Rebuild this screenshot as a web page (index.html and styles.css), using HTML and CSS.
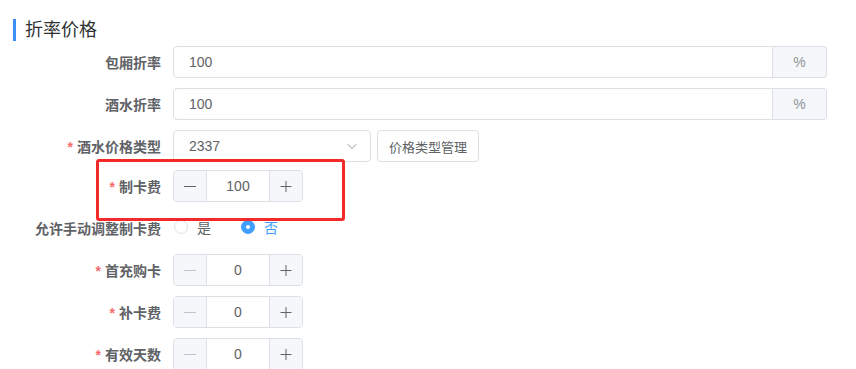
FILE: index.html
```html
<!DOCTYPE html>
<html>
<head>
    <title>折率价格</title>
    <link rel="stylesheet" href="styles.css">
</head>
<body>
    <div class="page">
        <h3 class="section-title">折率价格</h3>

        <form class="price-form" onsubmit="return false;">
            <div class="form-item">
                <label class="item-label">包厢折率</label>
                <div class="input-group wide">
                    <input type="text" class="text-input" value="100">
                    <span class="suffix">%</span>
                </div>
            </div>

            <div class="form-item">
                <label class="item-label">酒水折率</label>
                <div class="input-group wide">
                    <input type="text" class="text-input" value="100">
                    <span class="suffix">%</span>
                </div>
            </div>

            <div class="form-item tight">
                <label class="item-label"><span class="req">*</span>酒水价格类型</label>
                <div class="select-box">
                    <span class="select-value">2337</span>
                    <svg class="arrow" width="12" height="12" viewBox="0 0 12 12">
                        <path d="M1.5 4 L6 8.5 L10.5 4" fill="none" stroke="#c0c4cc" stroke-width="1.1"/>
                    </svg>
                </div>
                <button type="button" class="plain-btn">价格类型管理</button>
            </div>

            <div class="form-item">
                <label class="item-label"><span class="req">*</span>制卡费</label>
                <div class="number-input">
                    <span class="num-btn"><svg width="14" height="14" viewBox="0 0 14 14"><path d="M1 7.5 H13" stroke="currentColor"/></svg></span>
                    <input type="text" class="num-value" value="100">
                    <span class="num-btn"><svg width="14" height="14" viewBox="0 0 14 14"><path d="M1.5 7.5 H12.5 M7 2 V13" stroke="currentColor"/></svg></span>
                </div>
            </div>

            <div class="form-item">
                <label class="item-label">允许手动调整制卡费</label>
                <div class="radio-group">
                    <span class="radio"><span class="circle"></span>是</span>
                    <span class="radio checked"><span class="circle"></span>否</span>
                </div>
            </div>

            <div class="form-item">
                <label class="item-label"><span class="req">*</span>首充购卡</label>
                <div class="number-input">
                    <span class="num-btn disabled"><svg width="14" height="14" viewBox="0 0 14 14"><path d="M1 7.5 H13" stroke="currentColor"/></svg></span>
                    <input type="text" class="num-value" value="0">
                    <span class="num-btn"><svg width="14" height="14" viewBox="0 0 14 14"><path d="M1.5 7.5 H12.5 M7 2 V13" stroke="currentColor"/></svg></span>
                </div>
            </div>

            <div class="form-item">
                <label class="item-label"><span class="req">*</span>补卡费</label>
                <div class="number-input">
                    <span class="num-btn disabled"><svg width="14" height="14" viewBox="0 0 14 14"><path d="M1 7.5 H13" stroke="currentColor"/></svg></span>
                    <input type="text" class="num-value" value="0">
                    <span class="num-btn"><svg width="14" height="14" viewBox="0 0 14 14"><path d="M1.5 7.5 H12.5 M7 2 V13" stroke="currentColor"/></svg></span>
                </div>
            </div>

            <div class="form-item">
                <label class="item-label"><span class="req">*</span>有效天数</label>
                <div class="number-input">
                    <span class="num-btn disabled"><svg width="14" height="14" viewBox="0 0 14 14"><path d="M1 7.5 H13" stroke="currentColor"/></svg></span>
                    <input type="text" class="num-value" value="0">
                    <span class="num-btn"><svg width="14" height="14" viewBox="0 0 14 14"><path d="M1.5 7.5 H12.5 M7 2 V13" stroke="currentColor"/></svg></span>
                </div>
            </div>
        </form>

        <!-- annotation box -->
        <div class="highlight"></div>
    </div>
</body>
</html>
```

FILE: styles.css
```css
body {
    margin: 0;
    font-family: "Liberation Sans", "Noto Sans CJK SC", sans-serif;
    background-color: #fff;
    color: #606266;
}

.page {
    position: relative;
    padding-left: 13px;
    height: 369px;
    overflow: hidden;
}

.section-title {
    margin: 19px 0 5px 0;
    padding-left: 9px;
    border-left: 3px solid #3d8ef8;
    font-size: 18px;
    line-height: 22px;
    font-weight: normal;
    color: #303133;
}

.form-item {
    display: flex;
    align-items: center;
    height: 32px;
    margin-bottom: 10px;
}

.form-item.tight {
    margin-bottom: 8px;
}

.item-label {
    width: 160px;
    padding-right: 12px;
    box-sizing: border-box;
    text-align: right;
    font-size: 14px;
    font-weight: bold;
    color: #606266;
    white-space: nowrap;
}

.req {
    color: #f56c6c;
    margin-right: 4px;
}

.input-group {
    display: flex;
    height: 32px;
}

.input-group.wide {
    width: 654px;
}

.text-input {
    flex: 1;
    height: 32px;
    box-sizing: border-box;
    border: 1px solid #dcdfe6;
    border-radius: 4px 0 0 4px;
    padding: 0 15px;
    font-family: inherit;
    font-size: 14px;
    color: #606266;
    outline: none;
}

.suffix {
    width: 54px;
    box-sizing: border-box;
    border: 1px solid #dcdfe6;
    border-left: none;
    border-radius: 0 4px 4px 0;
    background-color: #f5f7fa;
    color: #909399;
    font-size: 14px;
    display: flex;
    align-items: center;
    justify-content: center;
}

.select-box {
    width: 198px;
    height: 32px;
    box-sizing: border-box;
    border: 1px solid #dcdfe6;
    border-radius: 4px;
    padding: 0 15px;
    display: flex;
    align-items: center;
    justify-content: space-between;
    font-size: 14px;
    color: #606266;
}

.arrow {
    margin-right: -3px;
}

.plain-btn {
    margin-left: 6px;
    width: 102px;
    height: 32px;
    border: 1px solid #dcdfe6;
    border-radius: 4px;
    background-color: #fff;
    color: #606266;
    font-family: inherit;
    font-size: 13px;
    padding: 0;
}

.number-input {
    display: flex;
    width: 130px;
    height: 32px;
    box-sizing: border-box;
    border: 1px solid #dcdfe6;
    border-radius: 4px;
    overflow: hidden;
}

.num-btn {
    width: 32px;
    background-color: #f5f7fa;
    color: #606266;
    display: flex;
    align-items: center;
    justify-content: center;
}

.num-btn:first-child {
    border-right: 1px solid #dcdfe6;
}

.num-btn:last-child {
    border-left: 1px solid #dcdfe6;
}

.num-btn.disabled {
    color: #c0c4cc;
}

.num-value {
    flex: 1;
    width: 0;
    border: none;
    text-align: center;
    font-family: inherit;
    font-size: 14px;
    color: #606266;
    outline: none;
    padding: 0;
}

.radio-group {
    display: flex;
    align-items: center;
    padding-left: 1px;
    margin-top: -3px;
}

.radio {
    display: flex;
    align-items: center;
    font-size: 14px;
    color: #606266;
    margin-right: 30px;
}

.radio .circle {
    width: 14px;
    height: 14px;
    box-sizing: border-box;
    border: 1px solid #dcdfe6;
    border-radius: 50%;
    margin-right: 9px;
    position: relative;
}

.radio.checked {
    color: #409eff;
}

.radio.checked .circle {
    border-color: #409eff;
    background-color: #409eff;
}

.radio.checked .circle::after {
    content: "";
    position: absolute;
    left: 4px;
    top: 4px;
    width: 4px;
    height: 4px;
    border-radius: 50%;
    background-color: #fff;
}

/* red annotation rectangle */
.highlight {
    position: absolute;
    left: 96px;
    top: 159px;
    width: 249px;
    height: 62px;
    box-sizing: border-box;
    border: 3px solid #f42a2a;
    border-radius: 3px;
}
```
